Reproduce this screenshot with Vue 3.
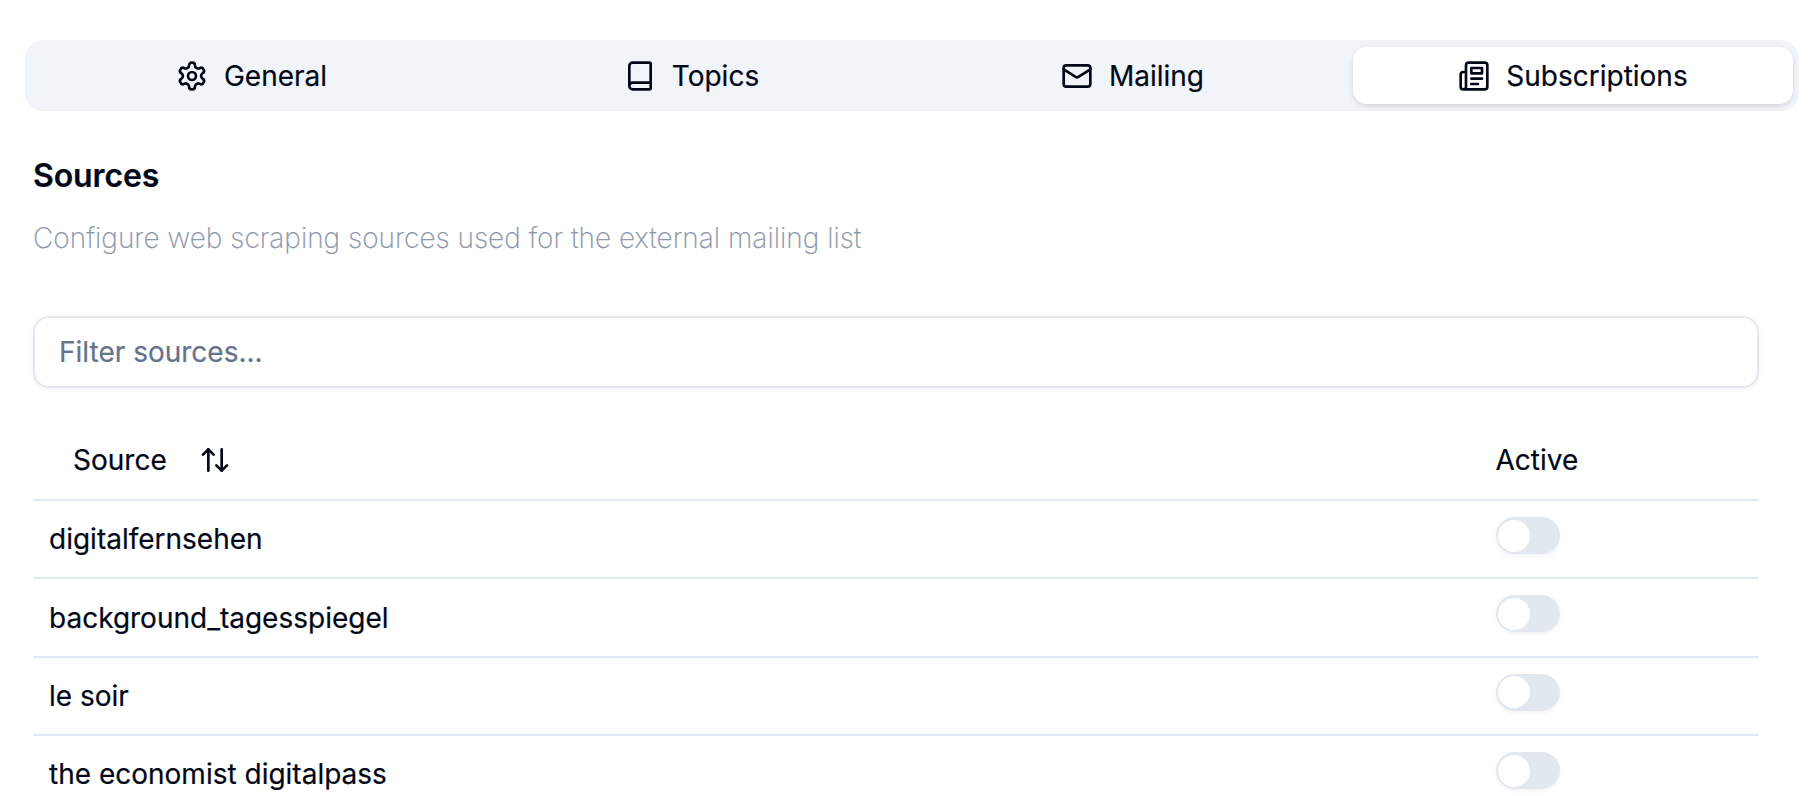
<script setup>
import { ref } from 'vue'

const tabs = [
  {
    name: 'General',
    paths: [
      'M12.22 2h-.44a2 2 0 0 0-2 2v.18a2 2 0 0 1-1 1.73l-.43.25a2 2 0 0 1-2 0l-.15-.08a2 2 0 0 0-2.73.73l-.22.38a2 2 0 0 0 .73 2.73l.15.1a2 2 0 0 1 1 1.72v.51a2 2 0 0 1-1 1.74l-.15.09a2 2 0 0 0-.73 2.73l.22.38a2 2 0 0 0 2.73.73l.15-.08a2 2 0 0 1 2 0l.43.25a2 2 0 0 1 1 1.73V20a2 2 0 0 0 2 2h.44a2 2 0 0 0 2-2v-.18a2 2 0 0 1 1-1.73l.43-.25a2 2 0 0 1 2 0l.15.08a2 2 0 0 0 2.73-.73l.22-.39a2 2 0 0 0-.73-2.73l-.15-.08a2 2 0 0 1-1-1.74v-.5a2 2 0 0 1 1-1.74l.15-.09a2 2 0 0 0 .73-2.73l-.22-.38a2 2 0 0 0-2.73-.73l-.15.08a2 2 0 0 1-2 0l-.43-.25a2 2 0 0 1-1-1.73V4a2 2 0 0 0-2-2z',
      'M9 12a3 3 0 1 0 6 0a3 3 0 1 0-6 0'
    ]
  },
  {
    name: 'Topics',
    paths: ['M4 19.5v-15A2.5 2.5 0 0 1 6.5 2H19a1 1 0 0 1 1 1v18a1 1 0 0 1-1 1H6.5a1 1 0 0 1 0-5H20']
  },
  {
    name: 'Mailing',
    paths: [
      'M4 4h16a2 2 0 0 1 2 2v12a2 2 0 0 1-2 2H4a2 2 0 0 1-2-2V6a2 2 0 0 1 2-2z',
      'm22 7-8.97 5.7a1.94 1.94 0 0 1-2.06 0L2 7'
    ]
  },
  {
    name: 'Subscriptions',
    paths: [
      'M4 22h16a2 2 0 0 0 2-2V4a2 2 0 0 0-2-2H8a2 2 0 0 0-2 2v16a2 2 0 0 1-2 2Zm0 0a2 2 0 0 1-2-2v-9c0-1.1.9-2 2-2h2',
      'M18 14h-8',
      'M15 18h-5',
      'M10 6h8v4h-8V6Z'
    ]
  }
]
const activeTab = ref('Subscriptions')
const filter = ref('')
const sources = ref([
  { name: 'digitalfernsehen', on: false },
  { name: 'background_tagesspiegel', on: false },
  { name: 'le soir', on: false },
  { name: 'the economist digitalpass', on: false }
])
</script>

<template>
  <main class="page">
    <nav class="tabs">
      <button
        v-for="tab in tabs"
        :key="tab.name"
        class="tab"
        :class="{ active: tab.name === activeTab }"
        @click="activeTab = tab.name"
      >
        <svg class="icon" viewBox="0 0 24 24">
          <path v-for="d in tab.paths" :key="d" :d="d" />
        </svg>
        <span>{{ tab.name }}</span>
      </button>
    </nav>
    <section class="panel">
      <h3 class="title">Sources</h3>
      <p class="description">Configure web scraping sources used for the external mailing list</p>
      <input v-model="filter" class="filter" placeholder="Filter sources..." />
      <div class="table">
        <div class="row head">
          <button class="sort">
            <span>Source</span>
            <svg class="icon" viewBox="0 0 24 24">
              <path d="m21 16-4 4-4-4" />
              <path d="M17 20V4" />
              <path d="m3 8 4-4 4 4" />
              <path d="M7 4v16" />
            </svg>
          </button>
          <span>Active</span>
        </div>
        <div v-for="source in sources" :key="source.name" class="row">
          <span>{{ source.name }}</span>
          <button class="switch" :class="{ on: source.on }" @click="source.on = !source.on">
            <span class="thumb"></span>
          </button>
        </div>
      </div>
    </section>
  </main>
</template>

<style>
body {
  background: #fff;
  overflow: hidden;
}
</style>

<style scoped>
.page {
  box-sizing: border-box;
  height: 796px;
  overflow: hidden;
  padding: 40px 13px 0 25px;
  font-family: Inter, sans-serif;
  font-size: 28px;
  line-height: 40px;
  color: #020817;
  -webkit-text-stroke: 0.2px currentColor;
}
button {
  border: 0;
  background: none;
  font: inherit;
  color: inherit;
}
.icon {
  width: 32px;
  height: 32px;
  flex: none;
  fill: none;
  stroke: currentColor;
  stroke-width: 2;
  stroke-linecap: round;
  stroke-linejoin: round;
}
.tabs {
  display: grid;
  grid-template-columns: 439px 441px 441px 440px;
  box-sizing: border-box;
  height: 71px;
  padding: 7px 6px 7px 7px;
  border-radius: 18px;
  background: #f1f5fa;
}
.tab {
  display: flex;
  align-items: center;
  justify-content: center;
  gap: 16px;
  padding: 0;
  border-radius: 14px;
}
.tab.active {
  background: #fff;
  box-shadow: 0 2px 6px rgba(0, 0, 0, 0.1), 0 2px 4px -2px rgba(0, 0, 0, 0.1);
}
.panel {
  padding: 45px 40px 0 8px;
}
.title {
  margin: 0;
  font-size: 32px;
  line-height: 40px;
  font-weight: 600;
  letter-spacing: -0.1px;
}
.description {
  margin: 22px 0 58px;
  font-weight: 200;
  color: #8f98ab;
}
.filter {
  display: block;
  box-sizing: border-box;
  width: 100%;
  height: 72px;
  padding: 0 24px;
  border: 2px solid #e2e8f0;
  border-radius: 16px;
  background: transparent;
  font: inherit;
  color: inherit;
  outline: none;
  box-shadow: 0 2px 4px rgba(0, 0, 0, 0.05);
}
.filter::placeholder {
  color: #64748b;
  opacity: 1;
}
.table {
  margin-top: 32px;
}
.row {
  display: grid;
  grid-template-columns: 1fr 263.5px;
  align-items: center;
  box-sizing: border-box;
  height: 78.4px;
  padding-left: 16px;
  border-bottom: 2px solid #e2e8f0;
}
.row.head {
  height: 81px;
}
.sort {
  display: flex;
  align-items: center;
  gap: 32px;
  padding: 0 24px;
}
.switch {
  display: flex;
  align-items: center;
  align-self: start;
  box-sizing: border-box;
  width: 64px;
  height: 37px;
  margin-top: 16px;
  padding: 0 2px;
  border-radius: 19px;
  background: #e2e8f0;
  box-shadow: 0 2px 4px rgba(0, 0, 0, 0.05);
}
.switch.on {
  justify-content: flex-end;
  background: #0f172a;
}
.thumb {
  width: 32px;
  height: 32px;
  border-radius: 50%;
  background: #fff;
}
</style>
